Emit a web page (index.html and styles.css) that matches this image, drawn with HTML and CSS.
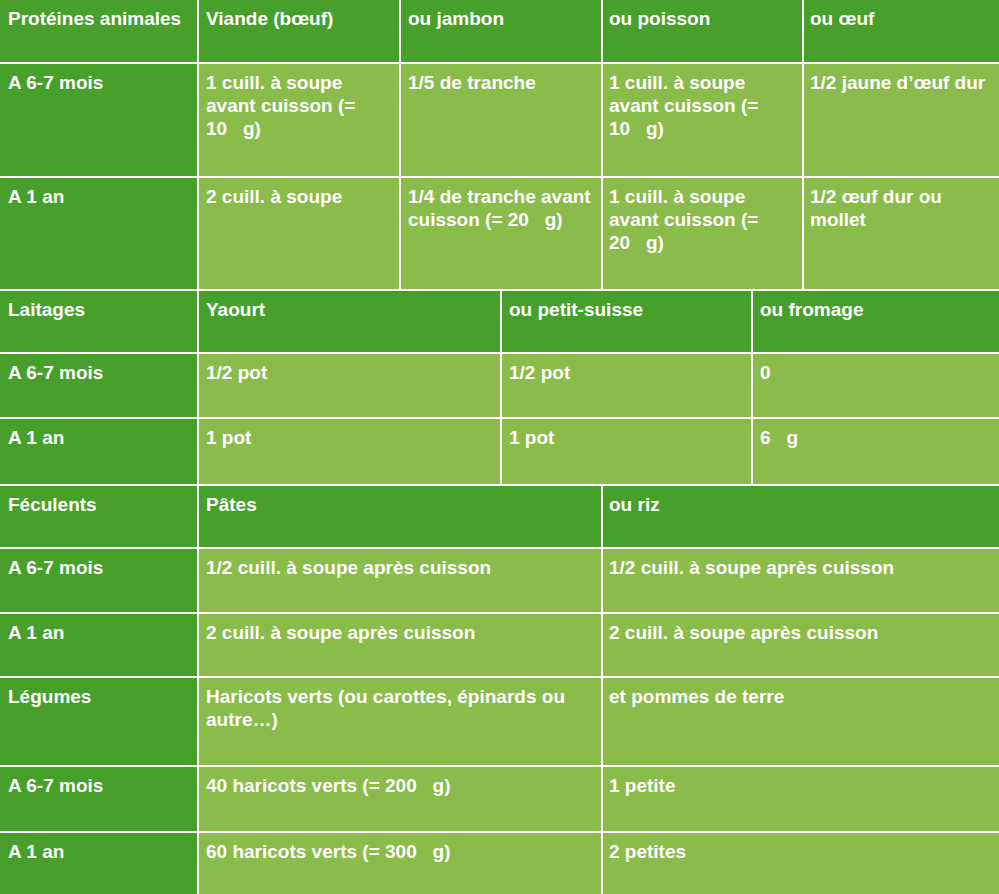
FILE: index.html
```html
<!DOCTYPE html>
<html lang="fr">
<head>
<meta charset="utf-8">
<title>Quantités</title>
<link rel="stylesheet" href="styles.css">
</head>
<body>
<div class="sheet">
  <section class="grid grid-proteines">
    <div class="cell head first">Protéines animales</div>
    <div class="cell head">Viande (bœuf)</div>
    <div class="cell head">ou jambon</div>
    <div class="cell head tight">ou poisson</div>
    <div class="cell head tight">ou œuf</div>

    <div class="cell age">A 6-7 mois</div>
    <div class="cell val">1 cuill. à soupe avant cuisson (= 10&nbsp;&nbsp;&nbsp;g)</div>
    <div class="cell val">1/5 de tranche</div>
    <div class="cell val tight">1 cuill. à soupe avant cuisson (= 10&nbsp;&nbsp;&nbsp;g)</div>
    <div class="cell val tight">1/2 jaune d’œuf dur</div>

    <div class="cell age">A 1 an</div>
    <div class="cell val">2 cuill. à soupe</div>
    <div class="cell val">1/4 de tranche avant cuisson (= 20&nbsp;&nbsp;&nbsp;g)</div>
    <div class="cell val tight">1 cuill. à soupe avant cuisson (= 20&nbsp;&nbsp;&nbsp;g)</div>
    <div class="cell val tight">1/2 œuf dur ou mollet</div>
  </section>

  <section class="grid grid-laitages">
    <div class="cell head first">Laitages</div>
    <div class="cell head">Yaourt</div>
    <div class="cell head">ou petit-suisse</div>
    <div class="cell head">ou fromage</div>

    <div class="cell age">A 6-7 mois</div>
    <div class="cell val">1/2 pot</div>
    <div class="cell val">1/2 pot</div>
    <div class="cell val">0</div>

    <div class="cell age">A 1 an</div>
    <div class="cell val">1 pot</div>
    <div class="cell val">1 pot</div>
    <div class="cell val">6&nbsp;&nbsp;&nbsp;g</div>
  </section>

  <section class="grid grid-feculents">
    <div class="cell head first">Féculents</div>
    <div class="cell head">Pâtes</div>
    <div class="cell head tight">ou riz</div>

    <div class="cell age">A 6-7 mois</div>
    <div class="cell val">1/2 cuill. à soupe après cuisson</div>
    <div class="cell val tight">1/2 cuill. à soupe après cuisson</div>

    <div class="cell age">A 1 an</div>
    <div class="cell val">2 cuill. à soupe après cuisson</div>
    <div class="cell val tight">2 cuill. à soupe après cuisson</div>

    <div class="cell age">Légumes</div>
    <div class="cell val">Haricots verts (ou carottes, épinards ou autre…)</div>
    <div class="cell val tight">et pommes de terre</div>

    <div class="cell age">A 6-7 mois</div>
    <div class="cell val">40 haricots verts (= 200&nbsp;&nbsp;&nbsp;g)</div>
    <div class="cell val tight">1 petite</div>

    <div class="cell age">A 1 an</div>
    <div class="cell val">60 haricots verts (= 300&nbsp;&nbsp;&nbsp;g)</div>
    <div class="cell val tight">2 petites</div>
  </section>
</div>
</body>
</html>
```

FILE: styles.css
```css
html, body {
  margin: 0;
  padding: 0;
  background: #ffffff;
}

body {
  font-family: "Liberation Sans", Arial, Helvetica, sans-serif;
  font-weight: bold;
  font-size: 19px;
  line-height: 23px;
  color: #ffffff;
}

.sheet {
  display: flex;
  flex-direction: column;
  gap: 2px;
  width: 999px;
}

.grid {
  display: grid;
  gap: 2px;
}

.grid-proteines {
  grid-template-columns: 197px 200px 200px 199px 1fr;
  grid-template-rows: 62px 112px 111px;
}

.grid-laitages {
  grid-template-columns: 197px 301px 249px 1fr;
  grid-template-rows: 61px 63px 65px;
}

.grid-feculents {
  grid-template-columns: 197px 402px 1fr;
  grid-template-rows: 61px 63px 62px 87px 64px 61px;
}

.cell {
  padding: 7px 3px 0 7px;
  overflow: hidden;
}

.cell.first,
.cell.age {
  padding-left: 8px;
}

.cell.tight {
  padding-left: 6px;
}

.cell.head,
.cell.age {
  background: #47a02b;
}

.cell.val {
  background: #89bc4a;
}
```
